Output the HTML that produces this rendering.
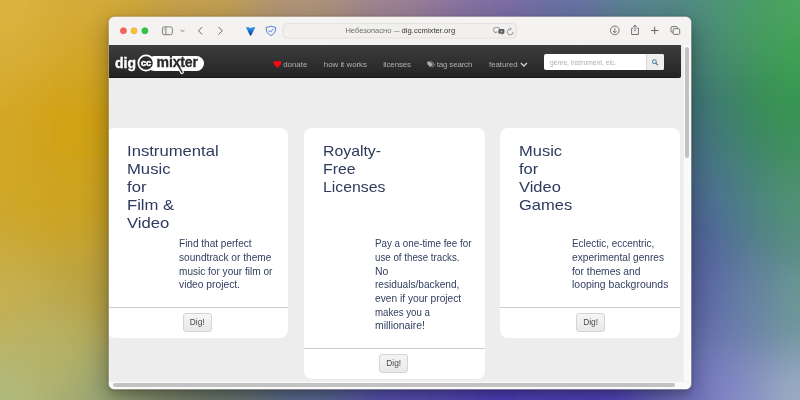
<!DOCTYPE html>
<html><head><meta charset="utf-8"><title>dig.ccmixter</title><style>
*{margin:0;padding:0;box-sizing:border-box}
html,body{width:800px;height:400px;overflow:hidden;background:#8a8a70;font-family:"Liberation Sans",sans-serif}
#bg{position:absolute;left:0;top:0;width:800px;height:400px}
#win{will-change:transform;position:absolute;left:109px;top:17px;width:582px;height:372px;border-radius:5.5px;background:#ededed;overflow:hidden;box-shadow:0 0 0 0.7px rgba(255,252,238,.5),0 0 1.5px 0.5px rgba(0,0,0,.2),0 8px 24px 3px rgba(0,0,0,.28),0 4px 7px rgba(0,0,0,.16)}
#tb{position:absolute;left:0;top:0;width:582px;height:28px;background:#f4f3f1}
.tl{position:absolute;top:10.5px;width:6.9px;height:6.9px;border-radius:50%}
.ic{position:absolute;display:block}
#url{position:absolute;left:236.4px;top:7px;width:140px;height:14px;font-size:7.6px;line-height:14px;text-align:left;white-space:nowrap}
#url .u1{color:#6e6e6e}#url .u2{color:#363636;letter-spacing:0.03px}#url .ud{display:inline-block;width:10px;text-align:center;color:#6e6e6e}#url .ud b{display:inline-block;font-weight:normal;transform:scaleX(.74);margin:0 -2px}
#nav{position:absolute;left:0;top:28px;width:571.7px;height:33px;background:linear-gradient(#3d3d3d,#242424);border-bottom:1px solid #181818;border-bottom-right-radius:2px}
#logo{position:absolute;left:0;top:0}
.dig{position:absolute;left:6px;top:9.6px;font-weight:bold;font-size:14px;line-height:16px;color:#fff;-webkit-text-stroke:0.35px #fff}
.pill{position:absolute;left:38px;top:10.8px;width:56.9px;height:15.2px;border-radius:7.6px;background:#fff}
.pill span{position:absolute;left:9.6px;top:-1.4px;font-weight:bold;font-size:14px;line-height:16px;color:#2c2c2c;letter-spacing:-0.15px;-webkit-text-stroke:0.35px #2c2c2c}
.ni{position:absolute;top:14.7px;font-size:7.9px;line-height:10px;color:#b0b0b0;white-space:nowrap}
#srch{position:absolute;left:435px;top:9.3px;width:119.5px;height:16px;background:#fff;border-radius:2px;overflow:hidden}
#srch span{position:absolute;left:6px;top:3.3px;font-size:6.7px;line-height:9px;color:#b0b0b0;white-space:nowrap}
#srch .sb{position:absolute;right:0;top:0;width:17.6px;height:16px;background:#eee;border-left:1px solid #d6d6d6}
#srch .sb svg{position:absolute;left:3.6px;top:3.6px}
.card{position:absolute;top:111.4px;width:181.5px;background:#fff;border-radius:8px;color:#2e3a5e}
.ttl{position:absolute;left:19.8px;top:13.7px;font-size:15px;line-height:17.9px;white-space:nowrap;transform:scaleX(1.11);transform-origin:0 0}
.dsc{color:#344062;position:absolute;left:73.5px;top:108.9px;font-size:10px;line-height:13.65px;white-space:nowrap}
.dsc span{display:block;transform-origin:0 0}
.ft{position:absolute;left:0;bottom:0;width:100%;height:31.1px;border-top:1px solid #cdcdcd;text-align:center}
.btn{position:absolute;left:75.5px;top:5.1px;width:29.4px;height:18.6px;border:1px solid #d4d4d4;border-radius:3px;background:linear-gradient(#f5f5f5,#e9e9e9);font-size:8.4px;line-height:16.8px;color:#4a4a4a;text-align:center}
#vs{position:absolute;left:574px;top:28px;width:8px;height:337px;background:#fafafa;border-left:1px solid #f0f0f0}
#vs i{position:absolute;left:1.3px;top:1.6px;width:3.5px;height:111.4px;border-radius:2px;background:#c2c2c2}
#hs{position:absolute;left:0;top:364px;width:582px;height:8px;background:#fafafa;border-top:1px solid #f0f0f0}
#hs i{position:absolute;left:4px;top:0.9px;width:562px;height:3.8px;border-radius:2px;background:#c2c2c2}
</style></head><body>
<svg id="bg" width="800" height="400" viewBox="0 0 800 400"><defs><filter id="bl" x="-10%" y="-10%" width="120%" height="120%"><feGaussianBlur stdDeviation="17"/></filter></defs><g filter="url(#bl)"><rect x="-40" y="-40" width="21" height="21" fill="#dbb341"/><rect x="-20" y="-40" width="21" height="21" fill="#dcb442"/><rect x="0" y="-40" width="21" height="21" fill="#dbb342"/><rect x="20" y="-40" width="21" height="21" fill="#dab240"/><rect x="40" y="-40" width="21" height="21" fill="#d6ae3c"/><rect x="60" y="-40" width="21" height="21" fill="#d4ac3b"/><rect x="80" y="-40" width="21" height="21" fill="#d3ab3b"/><rect x="100" y="-40" width="21" height="21" fill="#d2ab3b"/><rect x="120" y="-40" width="21" height="21" fill="#d0a93d"/><rect x="140" y="-40" width="21" height="21" fill="#cba543"/><rect x="160" y="-40" width="21" height="21" fill="#c6a24b"/><rect x="180" y="-40" width="21" height="21" fill="#c4a04f"/><rect x="200" y="-40" width="21" height="21" fill="#c39f51"/><rect x="220" y="-40" width="21" height="21" fill="#c09e56"/><rect x="240" y="-40" width="21" height="21" fill="#b99a63"/><rect x="260" y="-40" width="21" height="21" fill="#b29670"/><rect x="280" y="-40" width="21" height="21" fill="#b09476"/><rect x="300" y="-40" width="21" height="21" fill="#ae9378"/><rect x="320" y="-40" width="21" height="21" fill="#ab907c"/><rect x="340" y="-40" width="21" height="21" fill="#a48a86"/><rect x="360" y="-40" width="21" height="21" fill="#9e858f"/><rect x="380" y="-40" width="21" height="21" fill="#9c8294"/><rect x="400" y="-40" width="21" height="21" fill="#998096"/><rect x="420" y="-40" width="21" height="21" fill="#917a9b"/><rect x="440" y="-40" width="21" height="21" fill="#8b769e"/><rect x="460" y="-40" width="21" height="21" fill="#8673a1"/><rect x="480" y="-40" width="21" height="21" fill="#7f70a3"/><rect x="500" y="-40" width="21" height="21" fill="#7b6fa4"/><rect x="520" y="-40" width="21" height="21" fill="#7471a3"/><rect x="540" y="-40" width="21" height="21" fill="#6c72a3"/><rect x="560" y="-40" width="21" height="21" fill="#6873a3"/><rect x="580" y="-40" width="21" height="21" fill="#64779e"/><rect x="600" y="-40" width="21" height="21" fill="#5e7e95"/><rect x="620" y="-40" width="21" height="21" fill="#59848f"/><rect x="640" y="-40" width="21" height="21" fill="#57878c"/><rect x="660" y="-40" width="21" height="21" fill="#548987"/><rect x="680" y="-40" width="21" height="21" fill="#528c81"/><rect x="700" y="-40" width="21" height="21" fill="#4f917a"/><rect x="720" y="-40" width="21" height="21" fill="#4d9673"/><rect x="740" y="-40" width="21" height="21" fill="#4b996d"/><rect x="760" y="-40" width="21" height="21" fill="#4a9f65"/><rect x="780" y="-40" width="21" height="21" fill="#4ba560"/><rect x="800" y="-40" width="21" height="21" fill="#4ba65f"/><rect x="820" y="-40" width="21" height="21" fill="#4aa55f"/><rect x="-40" y="-20" width="21" height="21" fill="#dbb341"/><rect x="-20" y="-20" width="21" height="21" fill="#dcb443"/><rect x="0" y="-20" width="21" height="21" fill="#dcb443"/><rect x="20" y="-20" width="21" height="21" fill="#dab240"/><rect x="40" y="-20" width="21" height="21" fill="#d6ae3b"/><rect x="60" y="-20" width="21" height="21" fill="#d4ac3a"/><rect x="80" y="-20" width="21" height="21" fill="#d4ab3b"/><rect x="100" y="-20" width="21" height="21" fill="#d3ab3b"/><rect x="120" y="-20" width="21" height="21" fill="#d2aa3b"/><rect x="140" y="-20" width="21" height="21" fill="#cca542"/><rect x="160" y="-20" width="21" height="21" fill="#c6a14c"/><rect x="180" y="-20" width="21" height="21" fill="#c4a04f"/><rect x="200" y="-20" width="21" height="21" fill="#c4a050"/><rect x="220" y="-20" width="21" height="21" fill="#c19f54"/><rect x="240" y="-20" width="21" height="21" fill="#b99a63"/><rect x="260" y="-20" width="21" height="21" fill="#b29573"/><rect x="280" y="-20" width="21" height="21" fill="#b09477"/><rect x="300" y="-20" width="21" height="21" fill="#af9478"/><rect x="320" y="-20" width="21" height="21" fill="#ad927b"/><rect x="340" y="-20" width="21" height="21" fill="#a58b86"/><rect x="360" y="-20" width="21" height="21" fill="#9f8491"/><rect x="380" y="-20" width="21" height="21" fill="#9e8394"/><rect x="400" y="-20" width="21" height="21" fill="#9c8196"/><rect x="420" y="-20" width="21" height="21" fill="#92799c"/><rect x="440" y="-20" width="21" height="21" fill="#8c759f"/><rect x="460" y="-20" width="21" height="21" fill="#8772a2"/><rect x="480" y="-20" width="21" height="21" fill="#7e6ea6"/><rect x="500" y="-20" width="21" height="21" fill="#7b6da6"/><rect x="520" y="-20" width="21" height="21" fill="#756fa5"/><rect x="540" y="-20" width="21" height="21" fill="#6b71a6"/><rect x="560" y="-20" width="21" height="21" fill="#6871a6"/><rect x="580" y="-20" width="21" height="21" fill="#6674a3"/><rect x="600" y="-20" width="21" height="21" fill="#5e7d98"/><rect x="620" y="-20" width="21" height="21" fill="#598591"/><rect x="640" y="-20" width="21" height="21" fill="#588690"/><rect x="660" y="-20" width="21" height="21" fill="#55898a"/><rect x="680" y="-20" width="21" height="21" fill="#528b84"/><rect x="700" y="-20" width="21" height="21" fill="#4f917a"/><rect x="720" y="-20" width="21" height="21" fill="#4c9871"/><rect x="740" y="-20" width="21" height="21" fill="#4b9a6c"/><rect x="760" y="-20" width="21" height="21" fill="#4aa063"/><rect x="780" y="-20" width="21" height="21" fill="#4ba85e"/><rect x="800" y="-20" width="21" height="21" fill="#4ba95d"/><rect x="820" y="-20" width="21" height="21" fill="#4aa75d"/><rect x="-40" y="0" width="21" height="21" fill="#dbb340"/><rect x="-20" y="0" width="21" height="21" fill="#dcb442"/><rect x="0" y="0" width="21" height="21" fill="#dcb441"/><rect x="20" y="0" width="21" height="21" fill="#dab23e"/><rect x="40" y="0" width="21" height="21" fill="#d6ad39"/><rect x="60" y="0" width="21" height="21" fill="#d4ab38"/><rect x="80" y="0" width="21" height="21" fill="#d4ab3a"/><rect x="100" y="0" width="21" height="21" fill="#d3ab3a"/><rect x="120" y="0" width="21" height="21" fill="#d2a939"/><rect x="140" y="0" width="21" height="21" fill="#cca53f"/><rect x="160" y="0" width="21" height="21" fill="#c6a14b"/><rect x="180" y="0" width="21" height="21" fill="#c4a04f"/><rect x="200" y="0" width="21" height="21" fill="#c4a050"/><rect x="220" y="0" width="21" height="21" fill="#c29f53"/><rect x="240" y="0" width="21" height="21" fill="#b99a63"/><rect x="260" y="0" width="21" height="21" fill="#b29573"/><rect x="280" y="0" width="21" height="21" fill="#b09477"/><rect x="300" y="0" width="21" height="21" fill="#b09478"/><rect x="320" y="0" width="21" height="21" fill="#ad927a"/><rect x="340" y="0" width="21" height="21" fill="#a58b86"/><rect x="360" y="0" width="21" height="21" fill="#9f8491"/><rect x="380" y="0" width="21" height="21" fill="#9f8394"/><rect x="400" y="0" width="21" height="21" fill="#9d8295"/><rect x="420" y="0" width="21" height="21" fill="#92799c"/><rect x="440" y="0" width="21" height="21" fill="#8c759f"/><rect x="460" y="0" width="21" height="21" fill="#8772a2"/><rect x="480" y="0" width="21" height="21" fill="#7e6ea6"/><rect x="500" y="0" width="21" height="21" fill="#7c6da7"/><rect x="520" y="0" width="21" height="21" fill="#756fa6"/><rect x="540" y="0" width="21" height="21" fill="#6a71a6"/><rect x="560" y="0" width="21" height="21" fill="#6871a7"/><rect x="580" y="0" width="21" height="21" fill="#6673a3"/><rect x="600" y="0" width="21" height="21" fill="#5e7d97"/><rect x="620" y="0" width="21" height="21" fill="#598591"/><rect x="640" y="0" width="21" height="21" fill="#588691"/><rect x="660" y="0" width="21" height="21" fill="#558889"/><rect x="680" y="0" width="21" height="21" fill="#528a84"/><rect x="700" y="0" width="21" height="21" fill="#4e9179"/><rect x="720" y="0" width="21" height="21" fill="#4b9870"/><rect x="740" y="0" width="21" height="21" fill="#499a69"/><rect x="760" y="0" width="21" height="21" fill="#489f60"/><rect x="780" y="0" width="21" height="21" fill="#4aa75d"/><rect x="800" y="0" width="21" height="21" fill="#4aa85c"/><rect x="820" y="0" width="21" height="21" fill="#49a55c"/><rect x="-40" y="20" width="21" height="21" fill="#d9b13b"/><rect x="-20" y="20" width="21" height="21" fill="#d9b13b"/><rect x="0" y="20" width="21" height="21" fill="#d9b13b"/><rect x="20" y="20" width="21" height="21" fill="#d8af39"/><rect x="40" y="20" width="21" height="21" fill="#d5ac35"/><rect x="60" y="20" width="21" height="21" fill="#d3a931"/><rect x="80" y="20" width="21" height="21" fill="#d3a830"/><rect x="100" y="20" width="21" height="21" fill="#d2a831"/><rect x="120" y="20" width="21" height="21" fill="#d1a833"/><rect x="140" y="20" width="21" height="21" fill="#cda53a"/><rect x="160" y="20" width="21" height="21" fill="#c7a247"/><rect x="180" y="20" width="21" height="21" fill="#c4a04e"/><rect x="200" y="20" width="21" height="21" fill="#c3a050"/><rect x="220" y="20" width="21" height="21" fill="#c19e54"/><rect x="240" y="20" width="21" height="21" fill="#b99a62"/><rect x="260" y="20" width="21" height="21" fill="#b29571"/><rect x="280" y="20" width="21" height="21" fill="#b09476"/><rect x="300" y="20" width="21" height="21" fill="#af9378"/><rect x="320" y="20" width="21" height="21" fill="#ac917b"/><rect x="340" y="20" width="21" height="21" fill="#a48a86"/><rect x="360" y="20" width="21" height="21" fill="#9f8590"/><rect x="380" y="20" width="21" height="21" fill="#9d8394"/><rect x="400" y="20" width="21" height="21" fill="#9a8096"/><rect x="420" y="20" width="21" height="21" fill="#927a9b"/><rect x="440" y="20" width="21" height="21" fill="#8c759f"/><rect x="460" y="20" width="21" height="21" fill="#8673a1"/><rect x="480" y="20" width="21" height="21" fill="#7f6fa5"/><rect x="500" y="20" width="21" height="21" fill="#7b6ea5"/><rect x="520" y="20" width="21" height="21" fill="#7470a4"/><rect x="540" y="20" width="21" height="21" fill="#6b71a4"/><rect x="560" y="20" width="21" height="21" fill="#6772a4"/><rect x="580" y="20" width="21" height="21" fill="#64759f"/><rect x="600" y="20" width="21" height="21" fill="#5c7d94"/><rect x="620" y="20" width="21" height="21" fill="#57848e"/><rect x="640" y="20" width="21" height="21" fill="#55858b"/><rect x="660" y="20" width="21" height="21" fill="#508683"/><rect x="680" y="20" width="21" height="21" fill="#4d877d"/><rect x="700" y="20" width="21" height="21" fill="#4a8c76"/><rect x="720" y="20" width="21" height="21" fill="#48926d"/><rect x="740" y="20" width="21" height="21" fill="#469a61"/><rect x="760" y="20" width="21" height="21" fill="#459e5b"/><rect x="780" y="20" width="21" height="21" fill="#45a15a"/><rect x="800" y="20" width="21" height="21" fill="#45a359"/><rect x="820" y="20" width="21" height="21" fill="#44a259"/><rect x="-40" y="40" width="21" height="21" fill="#d8af38"/><rect x="-20" y="40" width="21" height="21" fill="#d8b038"/><rect x="0" y="40" width="21" height="21" fill="#d8b038"/><rect x="20" y="40" width="21" height="21" fill="#d7ae35"/><rect x="40" y="40" width="21" height="21" fill="#d4aa30"/><rect x="60" y="40" width="21" height="21" fill="#d2a72c"/><rect x="80" y="40" width="21" height="21" fill="#d2a62a"/><rect x="100" y="40" width="21" height="21" fill="#d2a62a"/><rect x="120" y="40" width="21" height="21" fill="#d1a62d"/><rect x="140" y="40" width="21" height="21" fill="#cea534"/><rect x="160" y="40" width="21" height="21" fill="#c9a23f"/><rect x="180" y="40" width="21" height="21" fill="#c5a149"/><rect x="200" y="40" width="21" height="21" fill="#c39f4e"/><rect x="220" y="40" width="21" height="21" fill="#bf9d54"/><rect x="240" y="40" width="21" height="21" fill="#b99a5f"/><rect x="260" y="40" width="21" height="21" fill="#b3966c"/><rect x="280" y="40" width="21" height="21" fill="#b09474"/><rect x="300" y="40" width="21" height="21" fill="#ae9277"/><rect x="320" y="40" width="21" height="21" fill="#aa8f7c"/><rect x="340" y="40" width="21" height="21" fill="#a38a85"/><rect x="360" y="40" width="21" height="21" fill="#9d858e"/><rect x="380" y="40" width="21" height="21" fill="#9a8293"/><rect x="400" y="40" width="21" height="21" fill="#977f96"/><rect x="420" y="40" width="21" height="21" fill="#907a9a"/><rect x="440" y="40" width="21" height="21" fill="#8a779d"/><rect x="460" y="40" width="21" height="21" fill="#85749f"/><rect x="480" y="40" width="21" height="21" fill="#7e72a1"/><rect x="500" y="40" width="21" height="21" fill="#7971a2"/><rect x="520" y="40" width="21" height="21" fill="#7272a0"/><rect x="540" y="40" width="21" height="21" fill="#6a749f"/><rect x="560" y="40" width="21" height="21" fill="#65759d"/><rect x="580" y="40" width="21" height="21" fill="#607997"/><rect x="600" y="40" width="21" height="21" fill="#587e8e"/><rect x="620" y="40" width="21" height="21" fill="#538287"/><rect x="640" y="40" width="21" height="21" fill="#4f8382"/><rect x="660" y="40" width="21" height="21" fill="#4b837d"/><rect x="680" y="40" width="21" height="21" fill="#4a837a"/><rect x="700" y="40" width="21" height="21" fill="#488874"/><rect x="720" y="40" width="21" height="21" fill="#468e6c"/><rect x="740" y="40" width="21" height="21" fill="#449760"/><rect x="760" y="40" width="21" height="21" fill="#439c5a"/><rect x="780" y="40" width="21" height="21" fill="#41a155"/><rect x="800" y="40" width="21" height="21" fill="#40a253"/><rect x="820" y="40" width="21" height="21" fill="#41a056"/><rect x="-40" y="60" width="21" height="21" fill="#d7ae35"/><rect x="-20" y="60" width="21" height="21" fill="#d7af36"/><rect x="0" y="60" width="21" height="21" fill="#d7ae35"/><rect x="20" y="60" width="21" height="21" fill="#d6ab30"/><rect x="40" y="60" width="21" height="21" fill="#d4a829"/><rect x="60" y="60" width="21" height="21" fill="#d2a627"/><rect x="80" y="60" width="21" height="21" fill="#d2a627"/><rect x="100" y="60" width="21" height="21" fill="#d1a628"/><rect x="120" y="60" width="21" height="21" fill="#d0a529"/><rect x="660" y="60" width="21" height="21" fill="#487e7a"/><rect x="680" y="60" width="21" height="21" fill="#477f78"/><rect x="700" y="60" width="21" height="21" fill="#458373"/><rect x="720" y="60" width="21" height="21" fill="#43896b"/><rect x="740" y="60" width="21" height="21" fill="#409060"/><rect x="760" y="60" width="21" height="21" fill="#3e9758"/><rect x="780" y="60" width="21" height="21" fill="#3e9e53"/><rect x="800" y="60" width="21" height="21" fill="#3da052"/><rect x="820" y="60" width="21" height="21" fill="#3d9d54"/><rect x="-40" y="80" width="21" height="21" fill="#d5ab2f"/><rect x="-20" y="80" width="21" height="21" fill="#d5ab2e"/><rect x="0" y="80" width="21" height="21" fill="#d5aa2c"/><rect x="20" y="80" width="21" height="21" fill="#d4a726"/><rect x="40" y="80" width="21" height="21" fill="#d3a41e"/><rect x="60" y="80" width="21" height="21" fill="#d2a31d"/><rect x="80" y="80" width="21" height="21" fill="#d1a31e"/><rect x="100" y="80" width="21" height="21" fill="#d0a31f"/><rect x="120" y="80" width="21" height="21" fill="#cfa321"/><rect x="660" y="80" width="21" height="21" fill="#45787a"/><rect x="680" y="80" width="21" height="21" fill="#437579"/><rect x="700" y="80" width="21" height="21" fill="#407a73"/><rect x="720" y="80" width="21" height="21" fill="#3e816a"/><rect x="740" y="80" width="21" height="21" fill="#3a8c59"/><rect x="760" y="80" width="21" height="21" fill="#389152"/><rect x="780" y="80" width="21" height="21" fill="#379751"/><rect x="800" y="80" width="21" height="21" fill="#369951"/><rect x="820" y="80" width="21" height="21" fill="#399954"/><rect x="-40" y="100" width="21" height="21" fill="#d4a92a"/><rect x="-20" y="100" width="21" height="21" fill="#d4a829"/><rect x="0" y="100" width="21" height="21" fill="#d4a827"/><rect x="20" y="100" width="21" height="21" fill="#d3a520"/><rect x="40" y="100" width="21" height="21" fill="#d3a216"/><rect x="60" y="100" width="21" height="21" fill="#d3a115"/><rect x="80" y="100" width="21" height="21" fill="#d0a117"/><rect x="100" y="100" width="21" height="21" fill="#cfa117"/><rect x="120" y="100" width="21" height="21" fill="#cfa11a"/><rect x="660" y="100" width="21" height="21" fill="#44747c"/><rect x="680" y="100" width="21" height="21" fill="#42737b"/><rect x="700" y="100" width="21" height="21" fill="#407874"/><rect x="720" y="100" width="21" height="21" fill="#3e7f6b"/><rect x="740" y="100" width="21" height="21" fill="#3a8a5a"/><rect x="760" y="100" width="21" height="21" fill="#388f54"/><rect x="780" y="100" width="21" height="21" fill="#369452"/><rect x="800" y="100" width="21" height="21" fill="#369652"/><rect x="820" y="100" width="21" height="21" fill="#399555"/><rect x="-40" y="120" width="21" height="21" fill="#d3a829"/><rect x="-20" y="120" width="21" height="21" fill="#d4a828"/><rect x="0" y="120" width="21" height="21" fill="#d4a727"/><rect x="20" y="120" width="21" height="21" fill="#d3a41e"/><rect x="40" y="120" width="21" height="21" fill="#d3a114"/><rect x="60" y="120" width="21" height="21" fill="#d3a113"/><rect x="80" y="120" width="21" height="21" fill="#d0a016"/><rect x="100" y="120" width="21" height="21" fill="#cfa016"/><rect x="120" y="120" width="21" height="21" fill="#cea119"/><rect x="660" y="120" width="21" height="21" fill="#467382"/><rect x="680" y="120" width="21" height="21" fill="#457282"/><rect x="700" y="120" width="21" height="21" fill="#43767b"/><rect x="720" y="120" width="21" height="21" fill="#407d71"/><rect x="740" y="120" width="21" height="21" fill="#3e8665"/><rect x="760" y="120" width="21" height="21" fill="#3d8c5d"/><rect x="780" y="120" width="21" height="21" fill="#3d915a"/><rect x="800" y="120" width="21" height="21" fill="#3d9359"/><rect x="820" y="120" width="21" height="21" fill="#3e935a"/><rect x="-40" y="140" width="21" height="21" fill="#d2a829"/><rect x="-20" y="140" width="21" height="21" fill="#d3a728"/><rect x="0" y="140" width="21" height="21" fill="#d2a726"/><rect x="20" y="140" width="21" height="21" fill="#d2a420"/><rect x="40" y="140" width="21" height="21" fill="#d2a219"/><rect x="60" y="140" width="21" height="21" fill="#d1a118"/><rect x="80" y="140" width="21" height="21" fill="#cfa119"/><rect x="100" y="140" width="21" height="21" fill="#cea119"/><rect x="120" y="140" width="21" height="21" fill="#cda11b"/><rect x="660" y="140" width="21" height="21" fill="#487088"/><rect x="680" y="140" width="21" height="21" fill="#476e8a"/><rect x="700" y="140" width="21" height="21" fill="#457482"/><rect x="720" y="140" width="21" height="21" fill="#427c76"/><rect x="740" y="140" width="21" height="21" fill="#40846b"/><rect x="760" y="140" width="21" height="21" fill="#3f8b61"/><rect x="780" y="140" width="21" height="21" fill="#40905d"/><rect x="800" y="140" width="21" height="21" fill="#41925c"/><rect x="820" y="140" width="21" height="21" fill="#42925f"/><rect x="-40" y="160" width="21" height="21" fill="#d0a829"/><rect x="-20" y="160" width="21" height="21" fill="#d0a728"/><rect x="0" y="160" width="21" height="21" fill="#d0a727"/><rect x="20" y="160" width="21" height="21" fill="#cfa524"/><rect x="40" y="160" width="21" height="21" fill="#cea421"/><rect x="60" y="160" width="21" height="21" fill="#cda31f"/><rect x="80" y="160" width="21" height="21" fill="#cca11f"/><rect x="100" y="160" width="21" height="21" fill="#cba11f"/><rect x="120" y="160" width="21" height="21" fill="#caa120"/><rect x="660" y="160" width="21" height="21" fill="#4a6e8c"/><rect x="680" y="160" width="21" height="21" fill="#496e8c"/><rect x="700" y="160" width="21" height="21" fill="#487387"/><rect x="720" y="160" width="21" height="21" fill="#467b7d"/><rect x="740" y="160" width="21" height="21" fill="#458374"/><rect x="760" y="160" width="21" height="21" fill="#448a6a"/><rect x="780" y="160" width="21" height="21" fill="#458f66"/><rect x="800" y="160" width="21" height="21" fill="#469264"/><rect x="820" y="160" width="21" height="21" fill="#479265"/><rect x="-40" y="180" width="21" height="21" fill="#cfa829"/><rect x="-20" y="180" width="21" height="21" fill="#d0a828"/><rect x="0" y="180" width="21" height="21" fill="#d0a728"/><rect x="20" y="180" width="21" height="21" fill="#cea625"/><rect x="40" y="180" width="21" height="21" fill="#cda423"/><rect x="60" y="180" width="21" height="21" fill="#cca322"/><rect x="80" y="180" width="21" height="21" fill="#caa121"/><rect x="100" y="180" width="21" height="21" fill="#c8a021"/><rect x="120" y="180" width="21" height="21" fill="#c8a022"/><rect x="660" y="180" width="21" height="21" fill="#4d6a93"/><rect x="680" y="180" width="21" height="21" fill="#4e6995"/><rect x="700" y="180" width="21" height="21" fill="#4d6f91"/><rect x="720" y="180" width="21" height="21" fill="#4b788a"/><rect x="740" y="180" width="21" height="21" fill="#4b8280"/><rect x="760" y="180" width="21" height="21" fill="#4d8b78"/><rect x="780" y="180" width="21" height="21" fill="#4f9172"/><rect x="800" y="180" width="21" height="21" fill="#4f946f"/><rect x="820" y="180" width="21" height="21" fill="#4d926d"/><rect x="-40" y="200" width="21" height="21" fill="#cfa82b"/><rect x="-20" y="200" width="21" height="21" fill="#cfa829"/><rect x="0" y="200" width="21" height="21" fill="#cfa829"/><rect x="20" y="200" width="21" height="21" fill="#cea627"/><rect x="40" y="200" width="21" height="21" fill="#cda424"/><rect x="60" y="200" width="21" height="21" fill="#cca323"/><rect x="80" y="200" width="21" height="21" fill="#c9a122"/><rect x="100" y="200" width="21" height="21" fill="#c8a021"/><rect x="120" y="200" width="21" height="21" fill="#c7a023"/><rect x="660" y="200" width="21" height="21" fill="#4f6896"/><rect x="680" y="200" width="21" height="21" fill="#4f6798"/><rect x="700" y="200" width="21" height="21" fill="#4e6d94"/><rect x="720" y="200" width="21" height="21" fill="#4d778e"/><rect x="740" y="200" width="21" height="21" fill="#4e8184"/><rect x="760" y="200" width="21" height="21" fill="#4f8b7b"/><rect x="780" y="200" width="21" height="21" fill="#519175"/><rect x="800" y="200" width="21" height="21" fill="#529472"/><rect x="820" y="200" width="21" height="21" fill="#509372"/><rect x="-40" y="220" width="21" height="21" fill="#cda931"/><rect x="-20" y="220" width="21" height="21" fill="#cea82e"/><rect x="0" y="220" width="21" height="21" fill="#cda82d"/><rect x="20" y="220" width="21" height="21" fill="#cca62c"/><rect x="40" y="220" width="21" height="21" fill="#cba528"/><rect x="60" y="220" width="21" height="21" fill="#caa327"/><rect x="80" y="220" width="21" height="21" fill="#c7a227"/><rect x="100" y="220" width="21" height="21" fill="#c6a127"/><rect x="120" y="220" width="21" height="21" fill="#c5a129"/><rect x="660" y="220" width="21" height="21" fill="#516699"/><rect x="680" y="220" width="21" height="21" fill="#51649b"/><rect x="700" y="220" width="21" height="21" fill="#506998"/><rect x="720" y="220" width="21" height="21" fill="#507390"/><rect x="740" y="220" width="21" height="21" fill="#507e88"/><rect x="760" y="220" width="21" height="21" fill="#51887f"/><rect x="780" y="220" width="21" height="21" fill="#528e7a"/><rect x="800" y="220" width="21" height="21" fill="#539177"/><rect x="820" y="220" width="21" height="21" fill="#539177"/><rect x="-40" y="240" width="21" height="21" fill="#c9ab3f"/><rect x="-20" y="240" width="21" height="21" fill="#c9ac40"/><rect x="0" y="240" width="21" height="21" fill="#c9ab3e"/><rect x="20" y="240" width="21" height="21" fill="#c8a939"/><rect x="40" y="240" width="21" height="21" fill="#c7a634"/><rect x="60" y="240" width="21" height="21" fill="#c4a433"/><rect x="80" y="240" width="21" height="21" fill="#c1a234"/><rect x="100" y="240" width="21" height="21" fill="#bfa135"/><rect x="120" y="240" width="21" height="21" fill="#bea136"/><rect x="660" y="240" width="21" height="21" fill="#53639d"/><rect x="680" y="240" width="21" height="21" fill="#53609e"/><rect x="700" y="240" width="21" height="21" fill="#53639d"/><rect x="720" y="240" width="21" height="21" fill="#556f98"/><rect x="740" y="240" width="21" height="21" fill="#567b91"/><rect x="760" y="240" width="21" height="21" fill="#57858a"/><rect x="780" y="240" width="21" height="21" fill="#588c85"/><rect x="800" y="240" width="21" height="21" fill="#598f83"/><rect x="820" y="240" width="21" height="21" fill="#599082"/><rect x="-40" y="260" width="21" height="21" fill="#c7ae4b"/><rect x="-20" y="260" width="21" height="21" fill="#c8af4d"/><rect x="0" y="260" width="21" height="21" fill="#c7af4c"/><rect x="20" y="260" width="21" height="21" fill="#c6ac48"/><rect x="40" y="260" width="21" height="21" fill="#c2a842"/><rect x="60" y="260" width="21" height="21" fill="#bda43f"/><rect x="80" y="260" width="21" height="21" fill="#baa13f"/><rect x="100" y="260" width="21" height="21" fill="#b9a03f"/><rect x="120" y="260" width="21" height="21" fill="#b9a03f"/><rect x="660" y="260" width="21" height="21" fill="#5664a0"/><rect x="680" y="260" width="21" height="21" fill="#5662a1"/><rect x="700" y="260" width="21" height="21" fill="#5866a1"/><rect x="720" y="260" width="21" height="21" fill="#5d73a0"/><rect x="740" y="260" width="21" height="21" fill="#607d9d"/><rect x="760" y="260" width="21" height="21" fill="#618796"/><rect x="780" y="260" width="21" height="21" fill="#649192"/><rect x="800" y="260" width="21" height="21" fill="#659490"/><rect x="820" y="260" width="21" height="21" fill="#63948d"/><rect x="-40" y="280" width="21" height="21" fill="#c7af4f"/><rect x="-20" y="280" width="21" height="21" fill="#c7b050"/><rect x="0" y="280" width="21" height="21" fill="#c7b050"/><rect x="20" y="280" width="21" height="21" fill="#c4ae4f"/><rect x="40" y="280" width="21" height="21" fill="#bfaa4c"/><rect x="60" y="280" width="21" height="21" fill="#baa446"/><rect x="80" y="280" width="21" height="21" fill="#b8a141"/><rect x="100" y="280" width="21" height="21" fill="#b8a041"/><rect x="120" y="280" width="21" height="21" fill="#b7a042"/><rect x="660" y="280" width="21" height="21" fill="#5a64a4"/><rect x="680" y="280" width="21" height="21" fill="#5b63a6"/><rect x="700" y="280" width="21" height="21" fill="#5d69a6"/><rect x="720" y="280" width="21" height="21" fill="#6479a5"/><rect x="740" y="280" width="21" height="21" fill="#667fa4"/><rect x="760" y="280" width="21" height="21" fill="#678a9c"/><rect x="780" y="280" width="21" height="21" fill="#6a9795"/><rect x="800" y="280" width="21" height="21" fill="#6a9994"/><rect x="820" y="280" width="21" height="21" fill="#699793"/><rect x="-40" y="300" width="21" height="21" fill="#c5af51"/><rect x="-20" y="300" width="21" height="21" fill="#c6b051"/><rect x="0" y="300" width="21" height="21" fill="#c5b052"/><rect x="20" y="300" width="21" height="21" fill="#c0af56"/><rect x="40" y="300" width="21" height="21" fill="#bbae58"/><rect x="60" y="300" width="21" height="21" fill="#b8a851"/><rect x="80" y="300" width="21" height="21" fill="#b7a347"/><rect x="100" y="300" width="21" height="21" fill="#b7a144"/><rect x="120" y="300" width="21" height="21" fill="#b4a046"/><rect x="660" y="300" width="21" height="21" fill="#5d65a6"/><rect x="680" y="300" width="21" height="21" fill="#5d64a7"/><rect x="700" y="300" width="21" height="21" fill="#5f6aa7"/><rect x="720" y="300" width="21" height="21" fill="#657aa7"/><rect x="740" y="300" width="21" height="21" fill="#6780a6"/><rect x="760" y="300" width="21" height="21" fill="#698b9e"/><rect x="780" y="300" width="21" height="21" fill="#6b9896"/><rect x="800" y="300" width="21" height="21" fill="#6c9a95"/><rect x="820" y="300" width="21" height="21" fill="#6b9895"/><rect x="-40" y="320" width="21" height="21" fill="#c0b159"/><rect x="-20" y="320" width="21" height="21" fill="#c0b159"/><rect x="0" y="320" width="21" height="21" fill="#beb15c"/><rect x="20" y="320" width="21" height="21" fill="#bab262"/><rect x="40" y="320" width="21" height="21" fill="#b8b264"/><rect x="60" y="320" width="21" height="21" fill="#b6af60"/><rect x="80" y="320" width="21" height="21" fill="#b3a856"/><rect x="100" y="320" width="21" height="21" fill="#b0a351"/><rect x="120" y="320" width="21" height="21" fill="#aa9f53"/><rect x="660" y="320" width="21" height="21" fill="#6069a9"/><rect x="680" y="320" width="21" height="21" fill="#6069a9"/><rect x="700" y="320" width="21" height="21" fill="#636fa9"/><rect x="720" y="320" width="21" height="21" fill="#677aa8"/><rect x="740" y="320" width="21" height="21" fill="#6a81a7"/><rect x="760" y="320" width="21" height="21" fill="#6c8ba2"/><rect x="780" y="320" width="21" height="21" fill="#6e959c"/><rect x="800" y="320" width="21" height="21" fill="#6f989a"/><rect x="820" y="320" width="21" height="21" fill="#6f989b"/><rect x="-40" y="340" width="21" height="21" fill="#b9b467"/><rect x="-20" y="340" width="21" height="21" fill="#b8b469"/><rect x="0" y="340" width="21" height="21" fill="#b7b468"/><rect x="20" y="340" width="21" height="21" fill="#b7b367"/><rect x="40" y="340" width="21" height="21" fill="#b7b367"/><rect x="60" y="340" width="21" height="21" fill="#b5b166"/><rect x="80" y="340" width="21" height="21" fill="#adab64"/><rect x="100" y="340" width="21" height="21" fill="#a4a464"/><rect x="120" y="340" width="21" height="21" fill="#9b9d65"/><rect x="140" y="340" width="21" height="21" fill="#919566"/><rect x="160" y="340" width="21" height="21" fill="#888e68"/><rect x="180" y="340" width="21" height="21" fill="#80876b"/><rect x="200" y="340" width="21" height="21" fill="#78816e"/><rect x="220" y="340" width="21" height="21" fill="#737d72"/><rect x="240" y="340" width="21" height="21" fill="#6f7979"/><rect x="260" y="340" width="21" height="21" fill="#697483"/><rect x="280" y="340" width="21" height="21" fill="#64708c"/><rect x="300" y="340" width="21" height="21" fill="#626e90"/><rect x="320" y="340" width="21" height="21" fill="#616a95"/><rect x="340" y="340" width="21" height="21" fill="#5f639f"/><rect x="360" y="340" width="21" height="21" fill="#5d5baa"/><rect x="380" y="340" width="21" height="21" fill="#5b56b0"/><rect x="400" y="340" width="21" height="21" fill="#5a54b2"/><rect x="420" y="340" width="21" height="21" fill="#5952b3"/><rect x="440" y="340" width="21" height="21" fill="#574fb5"/><rect x="460" y="340" width="21" height="21" fill="#554ab8"/><rect x="480" y="340" width="21" height="21" fill="#5348ba"/><rect x="500" y="340" width="21" height="21" fill="#5348ba"/><rect x="520" y="340" width="21" height="21" fill="#544ab9"/><rect x="540" y="340" width="21" height="21" fill="#544db7"/><rect x="560" y="340" width="21" height="21" fill="#554db8"/><rect x="580" y="340" width="21" height="21" fill="#554eb8"/><rect x="600" y="340" width="21" height="21" fill="#5752b7"/><rect x="620" y="340" width="21" height="21" fill="#5b5bb3"/><rect x="640" y="340" width="21" height="21" fill="#6166b1"/><rect x="660" y="340" width="21" height="21" fill="#666db0"/><rect x="680" y="340" width="21" height="21" fill="#6971b1"/><rect x="700" y="340" width="21" height="21" fill="#6c77b2"/><rect x="720" y="340" width="21" height="21" fill="#717fb2"/><rect x="740" y="340" width="21" height="21" fill="#7586b1"/><rect x="760" y="340" width="21" height="21" fill="#788fae"/><rect x="780" y="340" width="21" height="21" fill="#7c98ac"/><rect x="800" y="340" width="21" height="21" fill="#7e9caa"/><rect x="820" y="340" width="21" height="21" fill="#7d9da9"/><rect x="-40" y="360" width="21" height="21" fill="#b3b875"/><rect x="-20" y="360" width="21" height="21" fill="#b2b978"/><rect x="0" y="360" width="21" height="21" fill="#b3b875"/><rect x="20" y="360" width="21" height="21" fill="#b5b46c"/><rect x="40" y="360" width="21" height="21" fill="#b5b369"/><rect x="60" y="360" width="21" height="21" fill="#b1b069"/><rect x="80" y="360" width="21" height="21" fill="#a3a96e"/><rect x="100" y="360" width="21" height="21" fill="#9aa471"/><rect x="120" y="360" width="21" height="21" fill="#929c6e"/><rect x="140" y="360" width="21" height="21" fill="#87906b"/><rect x="160" y="360" width="21" height="21" fill="#818a6b"/><rect x="180" y="360" width="21" height="21" fill="#79846d"/><rect x="200" y="360" width="21" height="21" fill="#707d70"/><rect x="220" y="360" width="21" height="21" fill="#6d7a72"/><rect x="240" y="360" width="21" height="21" fill="#6b7779"/><rect x="260" y="360" width="21" height="21" fill="#647287"/><rect x="280" y="360" width="21" height="21" fill="#5f6e90"/><rect x="300" y="360" width="21" height="21" fill="#5e6c93"/><rect x="320" y="360" width="21" height="21" fill="#5e6a96"/><rect x="340" y="360" width="21" height="21" fill="#5d61a2"/><rect x="360" y="360" width="21" height="21" fill="#5a57af"/><rect x="380" y="360" width="21" height="21" fill="#5952b5"/><rect x="400" y="360" width="21" height="21" fill="#5951b6"/><rect x="420" y="360" width="21" height="21" fill="#5850b6"/><rect x="440" y="360" width="21" height="21" fill="#564cb8"/><rect x="460" y="360" width="21" height="21" fill="#5346bc"/><rect x="480" y="360" width="21" height="21" fill="#5143be"/><rect x="500" y="360" width="21" height="21" fill="#5143be"/><rect x="520" y="360" width="21" height="21" fill="#5245bd"/><rect x="540" y="360" width="21" height="21" fill="#5348bb"/><rect x="560" y="360" width="21" height="21" fill="#5347bc"/><rect x="580" y="360" width="21" height="21" fill="#5245bd"/><rect x="600" y="360" width="21" height="21" fill="#5347bd"/><rect x="620" y="360" width="21" height="21" fill="#5851ba"/><rect x="640" y="360" width="21" height="21" fill="#6363b8"/><rect x="660" y="360" width="21" height="21" fill="#6b6fb9"/><rect x="680" y="360" width="21" height="21" fill="#7074bb"/><rect x="700" y="360" width="21" height="21" fill="#757abd"/><rect x="720" y="360" width="21" height="21" fill="#7e85bf"/><rect x="740" y="360" width="21" height="21" fill="#838dbf"/><rect x="760" y="360" width="21" height="21" fill="#8898bc"/><rect x="780" y="360" width="21" height="21" fill="#91a5bc"/><rect x="800" y="360" width="21" height="21" fill="#93a9bc"/><rect x="820" y="360" width="21" height="21" fill="#8fa7b8"/><rect x="-40" y="380" width="21" height="21" fill="#b1ba7b"/><rect x="-20" y="380" width="21" height="21" fill="#b0bb7e"/><rect x="0" y="380" width="21" height="21" fill="#b0bb7d"/><rect x="20" y="380" width="21" height="21" fill="#b1b776"/><rect x="40" y="380" width="21" height="21" fill="#afb26e"/><rect x="60" y="380" width="21" height="21" fill="#a6ac6f"/><rect x="80" y="380" width="21" height="21" fill="#9ba774"/><rect x="100" y="380" width="21" height="21" fill="#97a676"/><rect x="120" y="380" width="21" height="21" fill="#909d72"/><rect x="140" y="380" width="21" height="21" fill="#828c6c"/><rect x="160" y="380" width="21" height="21" fill="#7f896b"/><rect x="180" y="380" width="21" height="21" fill="#77826d"/><rect x="200" y="380" width="21" height="21" fill="#6d7a70"/><rect x="220" y="380" width="21" height="21" fill="#6b7971"/><rect x="240" y="380" width="21" height="21" fill="#697778"/><rect x="260" y="380" width="21" height="21" fill="#61708b"/><rect x="280" y="380" width="21" height="21" fill="#5d6d93"/><rect x="300" y="380" width="21" height="21" fill="#5d6c94"/><rect x="320" y="380" width="21" height="21" fill="#5d6a96"/><rect x="340" y="380" width="21" height="21" fill="#5c60a3"/><rect x="360" y="380" width="21" height="21" fill="#5954b3"/><rect x="380" y="380" width="21" height="21" fill="#5851b7"/><rect x="400" y="380" width="21" height="21" fill="#5850b7"/><rect x="420" y="380" width="21" height="21" fill="#5850b7"/><rect x="440" y="380" width="21" height="21" fill="#554bb9"/><rect x="460" y="380" width="21" height="21" fill="#5243be"/><rect x="480" y="380" width="21" height="21" fill="#5041bf"/><rect x="500" y="380" width="21" height="21" fill="#5041bf"/><rect x="520" y="380" width="21" height="21" fill="#5143be"/><rect x="540" y="380" width="21" height="21" fill="#5245bd"/><rect x="560" y="380" width="21" height="21" fill="#5143be"/><rect x="580" y="380" width="21" height="21" fill="#5142bf"/><rect x="600" y="380" width="21" height="21" fill="#5142bf"/><rect x="620" y="380" width="21" height="21" fill="#554abd"/><rect x="640" y="380" width="21" height="21" fill="#6360bb"/><rect x="660" y="380" width="21" height="21" fill="#6e6fbd"/><rect x="680" y="380" width="21" height="21" fill="#7172bf"/><rect x="700" y="380" width="21" height="21" fill="#7678c0"/><rect x="720" y="380" width="21" height="21" fill="#8589c4"/><rect x="740" y="380" width="21" height="21" fill="#898fc5"/><rect x="760" y="380" width="21" height="21" fill="#909dc2"/><rect x="780" y="380" width="21" height="21" fill="#9baec2"/><rect x="800" y="380" width="21" height="21" fill="#9db1c2"/><rect x="820" y="380" width="21" height="21" fill="#98adbf"/><rect x="-40" y="400" width="21" height="21" fill="#b0ba7d"/><rect x="-20" y="400" width="21" height="21" fill="#b0bb7f"/><rect x="0" y="400" width="21" height="21" fill="#b0bb7e"/><rect x="20" y="400" width="21" height="21" fill="#afb87a"/><rect x="40" y="400" width="21" height="21" fill="#abb173"/><rect x="60" y="400" width="21" height="21" fill="#a0aa72"/><rect x="80" y="400" width="21" height="21" fill="#99a775"/><rect x="100" y="400" width="21" height="21" fill="#97a676"/><rect x="120" y="400" width="21" height="21" fill="#909d72"/><rect x="140" y="400" width="21" height="21" fill="#828c6c"/><rect x="160" y="400" width="21" height="21" fill="#7e896b"/><rect x="180" y="400" width="21" height="21" fill="#76826e"/><rect x="200" y="400" width="21" height="21" fill="#6d7a70"/><rect x="220" y="400" width="21" height="21" fill="#6b7971"/><rect x="240" y="400" width="21" height="21" fill="#697778"/><rect x="260" y="400" width="21" height="21" fill="#61708b"/><rect x="280" y="400" width="21" height="21" fill="#5d6d93"/><rect x="300" y="400" width="21" height="21" fill="#5d6c94"/><rect x="320" y="400" width="21" height="21" fill="#5d6a96"/><rect x="340" y="400" width="21" height="21" fill="#5c60a3"/><rect x="360" y="400" width="21" height="21" fill="#5954b3"/><rect x="380" y="400" width="21" height="21" fill="#5851b7"/><rect x="400" y="400" width="21" height="21" fill="#5850b7"/><rect x="420" y="400" width="21" height="21" fill="#5850b7"/><rect x="440" y="400" width="21" height="21" fill="#554bb9"/><rect x="460" y="400" width="21" height="21" fill="#5243be"/><rect x="480" y="400" width="21" height="21" fill="#5041bf"/><rect x="500" y="400" width="21" height="21" fill="#5041bf"/><rect x="520" y="400" width="21" height="21" fill="#5142be"/><rect x="540" y="400" width="21" height="21" fill="#5245bd"/><rect x="560" y="400" width="21" height="21" fill="#5143be"/><rect x="580" y="400" width="21" height="21" fill="#5141bf"/><rect x="600" y="400" width="21" height="21" fill="#5142bf"/><rect x="620" y="400" width="21" height="21" fill="#554abe"/><rect x="640" y="400" width="21" height="21" fill="#6360bd"/><rect x="660" y="400" width="21" height="21" fill="#6f70be"/><rect x="680" y="400" width="21" height="21" fill="#7272c0"/><rect x="700" y="400" width="21" height="21" fill="#7678c1"/><rect x="720" y="400" width="21" height="21" fill="#8589c5"/><rect x="740" y="400" width="21" height="21" fill="#8a90c6"/><rect x="760" y="400" width="21" height="21" fill="#919ec3"/><rect x="780" y="400" width="21" height="21" fill="#9cafc3"/><rect x="800" y="400" width="21" height="21" fill="#9db1c3"/><rect x="820" y="400" width="21" height="21" fill="#9aaec1"/><rect x="-40" y="420" width="21" height="21" fill="#b0b97b"/><rect x="-20" y="420" width="21" height="21" fill="#b0ba7d"/><rect x="0" y="420" width="21" height="21" fill="#afba7d"/><rect x="20" y="420" width="21" height="21" fill="#aeb679"/><rect x="40" y="420" width="21" height="21" fill="#a8af74"/><rect x="60" y="420" width="21" height="21" fill="#9fa973"/><rect x="80" y="420" width="21" height="21" fill="#99a574"/><rect x="100" y="420" width="21" height="21" fill="#95a374"/><rect x="120" y="420" width="21" height="21" fill="#8e9b71"/><rect x="140" y="420" width="21" height="21" fill="#848f6d"/><rect x="160" y="420" width="21" height="21" fill="#7f896c"/><rect x="180" y="420" width="21" height="21" fill="#77836e"/><rect x="200" y="420" width="21" height="21" fill="#6f7c70"/><rect x="220" y="420" width="21" height="21" fill="#6c7a72"/><rect x="240" y="420" width="21" height="21" fill="#6a777a"/><rect x="260" y="420" width="21" height="21" fill="#637188"/><rect x="280" y="420" width="21" height="21" fill="#5f6e91"/><rect x="300" y="420" width="21" height="21" fill="#5e6c93"/><rect x="320" y="420" width="21" height="21" fill="#5e6997"/><rect x="340" y="420" width="21" height="21" fill="#5d60a2"/><rect x="360" y="420" width="21" height="21" fill="#5a56b0"/><rect x="380" y="420" width="21" height="21" fill="#5952b5"/><rect x="400" y="420" width="21" height="21" fill="#5851b6"/><rect x="420" y="420" width="21" height="21" fill="#5850b6"/><rect x="440" y="420" width="21" height="21" fill="#564cb8"/><rect x="460" y="420" width="21" height="21" fill="#5345bc"/><rect x="480" y="420" width="21" height="21" fill="#5142be"/><rect x="500" y="420" width="21" height="21" fill="#5142be"/><rect x="520" y="420" width="21" height="21" fill="#5244be"/><rect x="540" y="420" width="21" height="21" fill="#5346bd"/><rect x="560" y="420" width="21" height="21" fill="#5245be"/><rect x="580" y="420" width="21" height="21" fill="#5244be"/><rect x="600" y="420" width="21" height="21" fill="#5346be"/><rect x="620" y="420" width="21" height="21" fill="#584ebd"/><rect x="640" y="420" width="21" height="21" fill="#6461bc"/><rect x="660" y="420" width="21" height="21" fill="#6f70be"/><rect x="680" y="420" width="21" height="21" fill="#7375bf"/><rect x="700" y="420" width="21" height="21" fill="#787bc1"/><rect x="720" y="420" width="21" height="21" fill="#8287c3"/><rect x="740" y="420" width="21" height="21" fill="#888fc4"/><rect x="760" y="420" width="21" height="21" fill="#8f9bc2"/><rect x="780" y="420" width="21" height="21" fill="#98a9c2"/><rect x="800" y="420" width="21" height="21" fill="#9aadc2"/><rect x="820" y="420" width="21" height="21" fill="#97abc0"/></g></svg>
<div id="win">
  <div id="tb">
    <svg class="ic" style="left:8px;top:8px" width="36" height="12" viewBox="0 0 36 12"><circle cx="6.4" cy="5.75" r="3.1" fill="#f6625c" stroke="#e2504a" stroke-width="0.5"/><circle cx="17" cy="5.75" r="3.1" fill="#f9be38" stroke="#e0a62c" stroke-width="0.5"/><circle cx="27.9" cy="5.75" r="3.1" fill="#2cc642" stroke="#22ac38" stroke-width="0.5"/></svg>
    <svg id="ic-side" class="ic" style="left:52px;top:8.5px" width="13" height="10" viewBox="0 0 13 10"><rect x="1.4" y="0.9" width="10" height="7.8" rx="1.8" fill="none" stroke="#747474" stroke-width="0.9"/><line x1="4.9" y1="0.9" x2="4.9" y2="8.7" stroke="#747474" stroke-width="0.9"/><line x1="2.6" y1="2.8" x2="3.7" y2="2.8" stroke="#747474" stroke-width="0.6"/><line x1="2.6" y1="4.2" x2="3.7" y2="4.2" stroke="#747474" stroke-width="0.6"/></svg>
    <svg class="ic" style="left:71px;top:12px" width="5" height="4" viewBox="0 0 5 4"><path d="M0.6 0.8 L2.5 2.8 L4.4 0.8" fill="none" stroke="#777" stroke-width="0.9"/></svg>
    <svg class="ic" style="left:88px;top:9px" width="7" height="10" viewBox="0 0 7 10"><path d="M5 1.3 L1.5 4.8 L5 8.3" fill="none" stroke="#6a6a6a" stroke-width="1" stroke-linecap="round" stroke-linejoin="round"/></svg>
    <svg class="ic" style="left:107.5px;top:9px" width="7" height="10" viewBox="0 0 7 10"><path d="M1.8 1.3 L5.3 4.8 L1.8 8.3" fill="none" stroke="#6a6a6a" stroke-width="1" stroke-linecap="round" stroke-linejoin="round"/></svg>
    <svg class="ic" style="left:136px;top:9px" width="12" height="11" viewBox="0 0 12 11"><defs><linearGradient id="vg" x1="0" y1="0" x2="0" y2="1"><stop offset="0" stop-color="#3fa6ea"/><stop offset="0.45" stop-color="#1d6fd0"/><stop offset="1" stop-color="#0a3a8c"/></linearGradient></defs><path d="M0.9 1.3 Q3.2 0.4 5.6 2.3 Q8 0.4 10.3 1.3 L6.3 9.3 Q5.6 10 4.9 9.3 Z" fill="url(#vg)"/></svg>
    <svg class="ic" style="left:156px;top:8px" width="12" height="12" viewBox="0 0 12 12"><path d="M5.9 1 C4.4 1.9 2.8 2.2 1.2 2.2 C1.1 6.2 2.3 9 5.9 10.5 C9.5 9 10.7 6.2 10.6 2.2 C9 2.2 7.4 1.9 5.9 1 Z" fill="none" stroke="#3a6fd0" stroke-width="0.9"/><path d="M3.9 5.6 L5.4 7.1 L8 4.3" fill="none" stroke="#3a6fd0" stroke-width="0.9" stroke-linecap="round" stroke-linejoin="round"/></svg>
    <svg class="ic" style="left:173px;top:5px" width="237" height="18" viewBox="0 0 237 18"><rect x="1.2" y="1.6" width="233.2" height="14.5" rx="3.6" fill="#f1f0ee" stroke="#dddbd9" stroke-width="0.7"/>
      <g transform="translate(210.8,4.7)"><path d="M2 0.9 H5.6 Q6.7 0.9 6.7 2 V4.2 Q6.7 5.3 5.6 5.3 H3.6 L2.6 6.4 V5.3 H2 Q0.9 5.3 0.9 4.2 V2 Q0.9 0.9 2 0.9 Z" fill="#f1f0ee" stroke="#777" stroke-width="0.7"/><path d="M6.9 2.4 H10.4 Q11.6 2.4 11.6 3.6 V5.9 Q11.6 7.1 10.4 7.1 H9.8 V8.2 L8.7 7.1 H6.9 Q5.7 7.1 5.7 5.9 V3.6 Q5.7 2.4 6.9 2.4 Z" fill="#5c5c5c"/><rect x="7.9" y="3.9" width="1.6" height="1.8" fill="#bdbdbd"/></g>
      <g transform="translate(223.4,4.3)"><path d="M7.9 5.6 A3 3 0 1 1 4.9 2.6" fill="none" stroke="#7a7a7a" stroke-width="0.75"/><path d="M4.3 1 L6.1 2.6 L4.3 4.1" fill="none" stroke="#7a7a7a" stroke-width="0.75"/></g></svg>
    <div id="url"><span class="u1">Небезопасно</span><span class="ud"><b>—</b></span><span class="u2">dig.ccmixter.org</span></div>
    <svg class="ic" style="left:496px;top:4px" width="84" height="20" viewBox="0 0 84 20">
      <g fill="none" stroke="#606060" stroke-width="0.85">
      <circle cx="9.8" cy="9.4" r="4.35"/><path d="M9.8 6.9 V11.6 M7.9 9.9 L9.8 11.8 L11.7 9.9"/>
      <path d="M28.3 7.1 H26.6 V13.5 H33.4 V7.1 H31.7"/><path d="M30 10.4 V4.2 M28.2 5.9 L30 4.1 L31.8 5.9"/>
      <path d="M49.7 5.8 V13.2 M46 9.5 H53.4" stroke-width="0.95"/>
      <path d="M67.9 11.2 H67 Q66 11.2 66 10.2 V6.6 Q66 5.6 67 5.6 H71.4 Q72.4 5.6 72.4 6.6 V7.4"/><rect x="68.2" y="7.7" width="6.5" height="5.7" rx="1"/>
      </g></svg>
    </div>
  <div id="nav">
    <div id="logo">
      <span class="dig">dig</span>
      <svg class="ic" style="left:60px;top:10px" width="20" height="22" viewBox="60 10 20 22"><path d="M70.5 23 L73 27.2" stroke="#fff" stroke-width="3.8" stroke-linecap="round"/></svg>
      <div class="pill"><span>mixter</span></div>
      <svg class="ic" style="left:27.2px;top:8.3px" width="20" height="20" viewBox="0 0 20 20"><circle cx="10" cy="10" r="7.65" fill="#2c2c2c" stroke="#fff" stroke-width="1.7"/><text x="10" y="12.5" text-anchor="middle" font-family="Liberation Sans, sans-serif" font-weight="bold" font-size="9.2" fill="#fff" stroke="#fff" stroke-width="0.5" letter-spacing="-0.1">cc</text></svg>
      <svg class="ic" style="left:60px;top:10px" width="20" height="22" viewBox="60 10 20 22"><path d="M68.2 18.6 L73 27.2" stroke="#2c2c2c" stroke-width="1.5" stroke-linecap="round"/></svg>
    </div>
    <svg class="ic" style="left:164px;top:14.6px" width="9" height="9" viewBox="0 0 9 9"><path d="M4.4 7.9 L0.9 4.3 A2.05 2.05 0 0 1 4.4 1.7 A2.05 2.05 0 0 1 7.9 4.3 Z" fill="#f40a12"/></svg>
    <span class="ni" style="left:174.2px">donate</span>
    <span class="ni" style="left:214.8px;letter-spacing:-0.02px">how it works</span>
    <span class="ni" style="left:274.2px;letter-spacing:-0.1px">licenses</span>
    <svg class="ic" style="left:318px;top:16px" width="9" height="7" viewBox="0 0 9 7"><path d="M0.3 0.4 H3 L6 3.4 L3.3 6.3 L0.3 3.2 Z" fill="#aaa"/><path d="M4.2 0.4 L7.6 3.6 L5 6.4" fill="none" stroke="#aaa" stroke-width="0.9"/></svg>
    <span class="ni" style="left:327.8px;letter-spacing:-0.15px">tag search</span>
    <span class="ni" style="left:380px;letter-spacing:-0.05px">featured</span>
    <svg class="ic" style="left:411px;top:17px" width="8" height="6" viewBox="0 0 8 6"><path d="M0.9 1 L3.9 4 L6.9 1" fill="none" stroke="#d0d0d0" stroke-width="1.3"/></svg>
    <div id="srch"><span>genre, instrument, etc.</span>
      <div class="sb"><svg width="9" height="9" viewBox="0 0 9 9"><circle cx="3.4" cy="3.7" r="2" fill="#d4ecf8" stroke="#466f8c" stroke-width="0.9"/><path d="M5 5.3 L6.7 6.9" stroke="#466f8c" stroke-width="1.1" stroke-linecap="round"/></svg></div>
    </div>
  </div>
  <div class="card" style="left:-2px;width:180.5px;height:209.7px">
    <div class="ttl" style="transform:scaleX(1.11)">Instrumental<br>Music<br>for<br>Film &amp;<br>Video</div>
    <div class="dsc" style="left:72.0px"><span style="transform:scaleX(1.004)">Find that perfect</span><span style="transform:scaleX(1.013)">soundtrack or theme</span><span style="transform:scaleX(1.006)">music for your film or</span><span style="transform:scaleX(1.025)">video project.</span></div>
    <div class="ft"><span class="btn">Dig!</span></div>
  </div>
  <div class="card" style="left:194.5px;width:181.2px;height:250.7px">
    <div class="ttl" style="transform:scaleX(1.055)">Royalty-<br>Free<br>Licenses</div>
    <div class="dsc" style="left:71.9px"><span style="transform:scaleX(0.98)">Pay a one-time fee for</span><span style="transform:scaleX(0.975)">use of these tracks.</span><span style="transform:scaleX(1.05)">No</span><span style="transform:scaleX(1.012)">residuals/backend,</span><span style="transform:scaleX(1.02)">even if your project</span><span style="transform:scaleX(0.97)">makes you a</span><span style="transform:scaleX(1.045)">millionaire!</span></div>
    <div class="ft"><span class="btn">Dig!</span></div>
  </div>
  <div class="card" style="left:391.4px;width:179.5px;height:209.7px">
    <div class="ttl" style="left:18.7px;transform:scaleX(1.10)">Music<br>for<br>Video<br>Games</div>
    <div class="dsc" style="left:71.5px"><span style="transform:scaleX(0.992)">Eclectic, eccentric,</span><span style="transform:scaleX(1.016)">experimental genres</span><span style="transform:scaleX(1.027)">for themes and</span><span style="transform:scaleX(1.044)">looping backgrounds</span></div>
    <div class="ft"><span class="btn">Dig!</span></div>
  </div>
  <div id="vs"><i></i></div>
  <div id="hs"><i></i></div>
</div>
</body></html>
